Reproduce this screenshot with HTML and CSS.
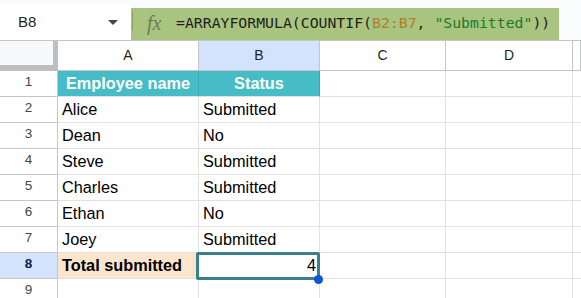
FILE: index.html
```html
<!DOCTYPE html>
<html lang="en">
<head>
    <meta charset="UTF-8">
    <meta name="viewport" content="width=device-width, initial-scale=1.0">
    <title>Sheet</title>
    <link rel="stylesheet" href="styles.css">
</head>
<body>
    <div class="topbar">
        <div class="namebox">
            <span class="ref">B8</span>
            <span class="caret"></span>
        </div>
        <div class="formula">
            <span class="sep"></span>
            <span class="fx">fx</span>
            <span class="expr">=ARRAYFORMULA(COUNTIF(<span class="range">B2:B7</span>, <span class="str">"Submitted"</span>))</span>
        </div>
    </div>

    <div class="sheet">
        <div class="row head-row">
            <div class="corner"></div>
            <div class="col-h col-a">A</div>
            <div class="col-h col-b active">B</div>
            <div class="col-h col-c">C</div>
            <div class="col-h col-d">D</div>
            <div class="col-h col-e"></div>
        </div>

        <div class="row">
            <div class="row-h">1</div>
            <div class="cell col-a title">Employee name</div>
            <div class="cell col-b title">Status</div>
            <div class="cell col-c"></div>
            <div class="cell col-d"></div>
            <div class="cell col-e"></div>
        </div>
        <div class="row">
            <div class="row-h">2</div>
            <div class="cell col-a">Alice</div>
            <div class="cell col-b">Submitted</div>
            <div class="cell col-c"></div>
            <div class="cell col-d"></div>
            <div class="cell col-e"></div>
        </div>
        <div class="row">
            <div class="row-h">3</div>
            <div class="cell col-a">Dean</div>
            <div class="cell col-b">No</div>
            <div class="cell col-c"></div>
            <div class="cell col-d"></div>
            <div class="cell col-e"></div>
        </div>
        <div class="row">
            <div class="row-h">4</div>
            <div class="cell col-a">Steve</div>
            <div class="cell col-b">Submitted</div>
            <div class="cell col-c"></div>
            <div class="cell col-d"></div>
            <div class="cell col-e"></div>
        </div>
        <div class="row">
            <div class="row-h">5</div>
            <div class="cell col-a">Charles</div>
            <div class="cell col-b">Submitted</div>
            <div class="cell col-c"></div>
            <div class="cell col-d"></div>
            <div class="cell col-e"></div>
        </div>
        <div class="row">
            <div class="row-h">6</div>
            <div class="cell col-a">Ethan</div>
            <div class="cell col-b">No</div>
            <div class="cell col-c"></div>
            <div class="cell col-d"></div>
            <div class="cell col-e"></div>
        </div>
        <div class="row">
            <div class="row-h">7</div>
            <div class="cell col-a">Joey</div>
            <div class="cell col-b">Submitted</div>
            <div class="cell col-c"></div>
            <div class="cell col-d"></div>
            <div class="cell col-e"></div>
        </div>
        <div class="row">
            <div class="row-h active">8</div>
            <div class="cell col-a total">Total submitted</div>
            <div class="cell col-b num selected">4</div>
            <div class="cell col-c"></div>
            <div class="cell col-d"></div>
            <div class="cell col-e"></div>
        </div>
        <div class="row">
            <div class="row-h">9</div>
            <div class="cell col-a"></div>
            <div class="cell col-b"></div>
            <div class="cell col-c"></div>
            <div class="cell col-d"></div>
            <div class="cell col-e"></div>
        </div>
    </div>
</body>
</html>
```

FILE: styles.css
```css
body{
    margin: 0;
    font-family: "Liberation Sans", Arial, sans-serif;
    color: #000;
    overflow: hidden;
}

/* top bar : name box + formula */
.topbar{
    display: flex;
    height: 40px;
    background: #f9fbfd;
    border-bottom: 1px solid #c4c7c5;
}

.namebox{
    width: 131px;
    height: 36px;
    margin-top: 4px;
    background: #fff;
    position: relative;
}

.namebox .ref{
    display: block;
    padding-left: 18px;
    line-height: 30px;
    padding-top: 3px;
    font-size: 15px;
    color: #1f1f1f;
}

.namebox .caret{
    position: absolute;
    left: 108px;
    top: 16px;
    border-left: 5px solid transparent;
    border-right: 5px solid transparent;
    border-top: 5px solid #444746;
}

.formula{
    width: 428px;
    height: 32px;
    margin-top: 8px;
    background: #a9c47f;
    display: flex;
    align-items: center;
}

.formula .sep{
    width: 1px;
    height: 20px;
    margin-left: 1px;
    margin-top: -6px;
    background: #8aa264;
}

.formula .fx{
    width: 18px;
    margin-left: 14px;
    font-family: "Liberation Serif", serif;
    font-style: italic;
    font-size: 20px;
    color: #6b7b56;
    line-height: 24px;
    margin-bottom: 3px;
}

.formula .expr{
    margin-left: 11px;
    font-family: "DejaVu Sans Mono", monospace;
    font-size: 14.8px;
    line-height: 30px;
    margin-bottom: 2px;
    color: #1f1f1f;
    white-space: pre;
}

.formula .range{
    color: #b0802b;
}

.formula .str{
    color: #1b7a2c;
}

/* grid */
.row{
    display: flex;
    height: 26px;
}

.head-row{
    height: 30px;
}

.corner{
    width: 58px;
    height: 30px;
    box-sizing: border-box;
    background: #f8f9fa;
    border-right: 5px solid #bfbfbf;
    border-bottom: 6px solid #bfbfbf;
    flex: none;
}

.col-a{ width: 141px; }
.col-b{ width: 121px; }
.col-c{ width: 126px; }
.col-d{ width: 127px; }
.col-e{ flex: 1; }

.col-h{
    flex-shrink: 0;
    box-sizing: border-box;
    height: 30px;
    border-right: 1px solid #c4c7c5;
    border-bottom: 1px solid #c4c7c5;
    text-align: center;
    font-size: 14px;
    line-height: 29px;
    color: #1f1f1f;
    background: #fff;
}

.col-h.col-e{
    flex: 1;
}

.col-h.active{
    background: #d3e3fd;
}

.row-h{
    width: 58px;
    flex: none;
    box-sizing: border-box;
    border-right: 1px solid #c4c7c5;
    border-bottom: 1px solid #c4c7c5;
    text-align: center;
    font-size: 13.5px;
    line-height: 22px;
    color: #444746;
    background: #fff;
}

.row-h.active{
    background: #d3e3fd;
    color: #0a1f44;
    font-weight: bold;
}

.cell{
    flex-shrink: 0;
    box-sizing: border-box;
    border-right: 1px solid #e1e1e1;
    border-bottom: 1px solid #e1e1e1;
    padding: 0 4px;
    font-size: 16.3px;
    line-height: 25px;
    white-space: nowrap;
}

.cell.col-e{
    flex: 1;
}

.cell.title{
    background: #46bdc6;
    border-right-color: #3aa8b1;
    color: #fff;
    font-weight: bold;
    text-align: center;
}

.cell.total{
    background: #fce5cd;
    border-right-color: #f0d6bb;
    font-weight: bold;
}

.cell.num{
    text-align: right;
}

/* selected cell B8 */
.selected{
    position: relative;
    padding-right: 3px;
}

.selected::before{
    content: "";
    position: absolute;
    left: -3px;
    top: -1px;
    right: -1px;
    bottom: -2px;
    border: 3px solid #3b7f8c;
    border-radius: 2px;
}

.selected::after{
    content: "";
    position: absolute;
    right: -4px;
    bottom: -6px;
    width: 9px;
    height: 9px;
    border-radius: 50%;
    background: #0b57d0;
}
```
